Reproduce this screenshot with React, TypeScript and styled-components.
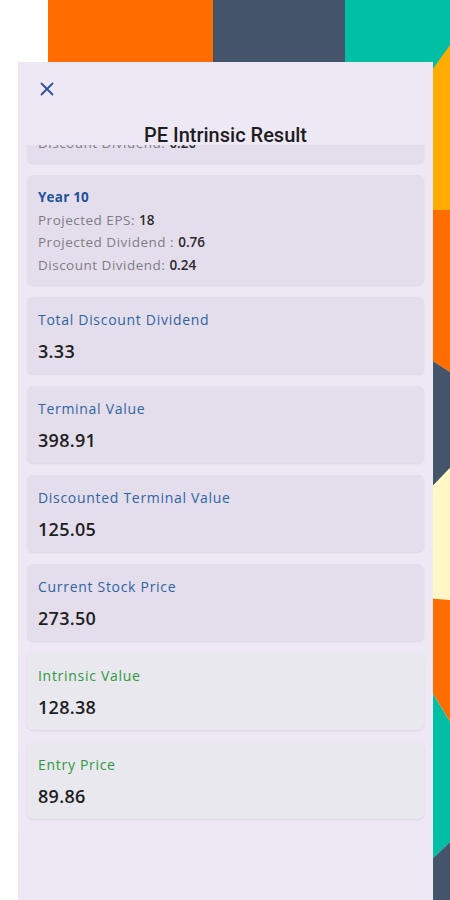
import React from 'react';
import styled, { createGlobalStyle } from 'styled-components';

const GlobalStyle = createGlobalStyle`
  html, body {
    margin: 0;
    padding: 0;
    background: #ffffff;
  }
  * {
    box-sizing: border-box;
  }
`;

const Page = styled.div`
  position: relative;
  width: 450px;
  height: 900px;
  padding-top: 62px;
  overflow: hidden;
  font-family: "Open Sans", "Noto Sans", sans-serif;
`;

const Backdrop = styled.svg`
  position: absolute;
  top: 0;
  left: 0;
  width: 450px;
  height: 900px;
`;

const Sheet = styled.div`
  position: relative;
  display: flex;
  flex-direction: column;
  width: 415px;
  height: 838px;
  margin-left: 18px;
  background: #eee8f4;
`;

const Header = styled.div`
  display: flex;
  flex-direction: column;
  height: 83px;
  padding: 20px 0 0 22px;
`;

const CloseButton = styled.button`
  display: flex;
  align-items: center;
  justify-content: center;
  width: 14px;
  height: 14px;
  padding: 0;
  border: none;
  background: transparent;
  cursor: pointer;
`;

const Title = styled.div`
  margin: 27px 0 0 -22px;
  text-align: center;
  font-family: Roboto, "Noto Sans", sans-serif;
  font-size: 20px;
  font-weight: 500;
  line-height: 24px;
  color: #1d1d1f;
`;

const Scroller = styled.div`
  flex: 1;
  overflow: hidden;
  padding: 0 9px;
`;

const List = styled.div`
  display: flex;
  flex-direction: column;
  gap: 12px;
`;

const Card = styled.div<{ $tone: 'blue' | 'green'; $clipped?: boolean }>`
  display: flex;
  flex-direction: column;
  margin-top: ${p => (p.$clipped ? '-92px' : '0')};
  padding: 12px 11px 11px;
  border-radius: 6px;
  background: ${p => (p.$tone === 'green' ? '#e8e8ee' : '#e4deec')};
  box-shadow: 0 1px 2px rgba(40, 30, 60, 0.09);
`;

const YearCard = styled(Card)`
  padding: 11px 11px 9px;
`;

const YearTitle = styled.div`
  font-size: 13.5px;
  font-weight: 700;
  line-height: 22.5px;
  letter-spacing: 0.2px;
  color: #1f5297;
`;

const YearLine = styled.div`
  font-size: 13.5px;
  line-height: 22.5px;
  letter-spacing: 0.5px;
  color: #7d7d84;
`;

const YearValue = styled.span`
  font-weight: 600;
  letter-spacing: 0;
  color: #2a2a2e;
`;

const Label = styled.div<{ $tone: 'blue' | 'green' }>`
  font-size: 14px;
  line-height: 22px;
  letter-spacing: 0.7px;
  color: ${p => (p.$tone === 'green' ? '#2f9a3d' : '#2f64a3')};
`;

const Value = styled.div`
  margin-top: 8px;
  font-size: 18px;
  font-weight: 600;
  line-height: 24px;
  letter-spacing: 0.3px;
  color: #1e1e22;
`;

type Year = { year: number; eps: string; dividend: string; discount: string };

const years: Year[] = [
  { year: 9, eps: '16.4', dividend: '0.69', discount: '0.20' },
  { year: 10, eps: '18', dividend: '0.76', discount: '0.24' },
];

const results: { label: string; value: string; tone: 'blue' | 'green' }[] = [
  { label: 'Total Discount Dividend', value: '3.33', tone: 'blue' },
  { label: 'Terminal Value', value: '398.91', tone: 'blue' },
  { label: 'Discounted Terminal Value', value: '125.05', tone: 'blue' },
  { label: 'Current Stock Price', value: '273.50', tone: 'blue' },
  { label: 'Intrinsic Value', value: '128.38', tone: 'green' },
  { label: 'Entry Price', value: '89.86', tone: 'green' },
];

const CloseIcon = () => (
  <svg width="14" height="14" viewBox="0 0 14 14">
    <path d="M1.5 1.5 12.5 12.5M12.5 1.5 1.5 12.5" stroke="#2b4f9c" strokeWidth="1.8" strokeLinecap="round" />
  </svg>
);

const Pattern = () => (
  <Backdrop viewBox="0 0 450 900">
    <rect x="48" y="0" width="165" height="80" fill="#ff6d00" />
    <rect x="213" y="0" width="132" height="80" fill="#44546b" />
    <rect x="345" y="0" width="105" height="80" fill="#00bfa5" />
    <polygon points="425,80 450,45 450,212 425,212" fill="#ffab00" />
    <polygon points="425,210 450,210 450,372 425,356" fill="#ff6d00" />
    <polygon points="425,356 450,372 450,468 425,494" fill="#44546b" />
    <polygon points="425,494 450,468 450,600 425,598" fill="#fff8c6" />
    <polygon points="425,598 450,600 450,722 425,680" fill="#ff6d00" />
    <polygon points="425,680 450,722 450,842 425,866" fill="#00bfa5" />
    <polygon points="425,866 450,842 450,900 425,900" fill="#44546b" />
  </Backdrop>
);

export default function App() {
  return (
    <>
      <GlobalStyle />
      <Page>
        <Pattern />
        <Sheet>
          <Header>
            <CloseButton aria-label="Close">
              <CloseIcon />
            </CloseButton>
            <Title>PE Intrinsic Result</Title>
          </Header>
          <Scroller>
            <List>
              {years.map((y, i) => (
                <YearCard key={y.year} $tone="blue" $clipped={i === 0}>
                  <YearTitle>Year {y.year}</YearTitle>
                  <YearLine>
                    Projected EPS: <YearValue>{y.eps}</YearValue>
                  </YearLine>
                  <YearLine>
                    Projected Dividend : <YearValue>{y.dividend}</YearValue>
                  </YearLine>
                  <YearLine>
                    Discount Dividend: <YearValue>{y.discount}</YearValue>
                  </YearLine>
                </YearCard>
              ))}
              {results.map(r => (
                <Card key={r.label} $tone={r.tone}>
                  <Label $tone={r.tone}>{r.label}</Label>
                  <Value>{r.value}</Value>
                </Card>
              ))}
            </List>
          </Scroller>
        </Sheet>
      </Page>
    </>
  );
}
